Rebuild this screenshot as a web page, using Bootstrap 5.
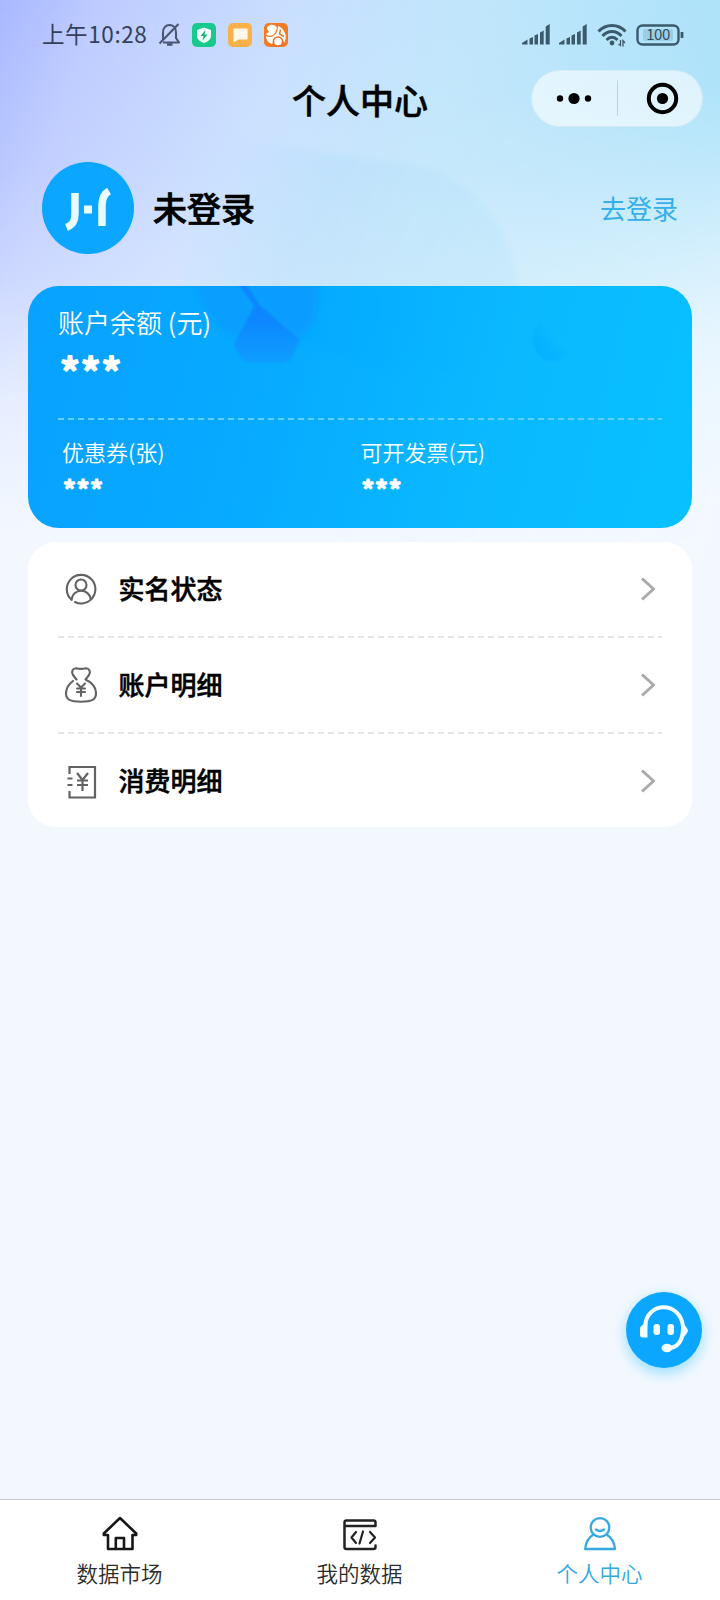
<!DOCTYPE html>
<html lang="zh-CN">
<head>
<meta charset="utf-8">
<meta name="viewport" content="width=device-width, initial-scale=1">
<title>个人中心</title>
<link href="https://cdn.jsdelivr.net/npm/bootstrap@5.3.0/dist/css/bootstrap.min.css" rel="stylesheet">
<style>
  body { font-family: "Noto Sans CJK SC", sans-serif; background: #f3f8ff; color: #000; }
  .app-page { height: 1600px; overflow: hidden; }
  .hero-art { top: 0; left: 0; z-index: 0; }
  .layer { z-index: 1; }
  .status-bar { height: 70px; padding: 0 36px 0 42px; color: #34405a; }
  .status-time { font-size: 22.5px; line-height: 30px; letter-spacing: .6px; width: 115px; white-space: nowrap; margin-top: -4px; }
  .title-bar { height: 56px; padding-right: 17px; }
  .title-bar h1 { font-size: 34px; line-height: 50px; font-weight: 500; margin: 5px 0 0; -webkit-text-stroke: .5px #000; }
  .title-side { padding-left: 17px; }
  .capsule { width: 172px; height: 57px; border-radius: 29px; background: rgba(255,255,255,.58); border: 1px solid rgba(150,200,220,.22); }
  .user-row { height: 92px; margin: 36px 42px 32px; }
  .user-name { font-size: 34px; line-height: 46px; font-weight: 500; margin-left: 19px; -webkit-text-stroke: .7px #000; }
  .login-link { font-size: 26px; line-height: 36px; color: #35afea; text-decoration: none; margin-top: -1px; }
  .balance-card { margin: 0 28px; height: 242px; border-radius: 31px; color: #fff; padding: 0 30px 0 30px;
    background: linear-gradient(105deg, #08a1ff 0%, #07abff 38%, #0ab8ff 66%, #08c1ff 100%); }
  .card-art { top: 0; left: 0; }
  .bal-label { font-size: 26px; line-height: 36px; padding-top: 18px; font-weight: 350; }
  .bal-stars { font-size: 39px; line-height: 44px; font-weight: 700; letter-spacing: 1px; height: 44px; margin-top: 8px; padding-left: 2px; -webkit-text-stroke: 1.5px #fff; }
  .sub-label { font-size: 22px; line-height: 32px; font-weight: 350; }
  .sub-stars { font-size: 25.5px; line-height: 30px; height: 30px; font-weight: 700; letter-spacing: .6px; margin-top: 7px; padding-left: 1px; -webkit-text-stroke: 1.2px #fff; }
  .dash-line { height: 2px; background: repeating-linear-gradient(90deg, var(--dash) 0 6px, transparent 6px 10px); }
  .menu-card { margin: 14px 28px 0; height: 285px; border-radius: 28px; background: #fff; padding: 0 30px; }
  .menu-item { height: 94px; padding: 0 5px 0 7px; font-size: 26px; line-height: 36px; font-weight: 500; color: #000; text-decoration: none; }
  .menu-item svg { flex: none; }
  .menu-item span { margin-left: 21.5px; margin-top: -2px; -webkit-text-stroke: .5px #000; }
  .tab-bar { height: 101px; background: #fff; border-top: 1px solid #c9c9d3; }
  .tab-item { font-size: 21.5px; line-height: 30px; color: #2b2b2b; text-decoration: none; padding-top: 14px; font-weight: 350; }
  .tab-item.on { color: #2fa9e0; }
  .tab-item span { margin-top: 4px; margin-left: -1px; }
  .service-btn { width: 76px; height: 76px; border: 0; padding: 0; margin: 0 18px 131px auto; border-radius: 50%; background: #0ba6ff; box-shadow: 0 5px 14px rgba(20,185,255,.42); }
</style>
</head>
<body>
<div class="app-page position-relative d-flex flex-column">
  <svg class="hero-art position-absolute" width="720" height="560" aria-hidden="true">
    <defs>
      <linearGradient id="skyH" x1="0" y1="0" x2="1" y2=".25">
        <stop offset="0" stop-color="#a8b8ff"/><stop offset=".13" stop-color="#bdcbff"/><stop offset=".38" stop-color="#c9dfff"/>
        <stop offset=".62" stop-color="#c0e6fb"/><stop offset="1" stop-color="#aae2fa"/>
      </linearGradient>
      <linearGradient id="skyV" x1="0" y1="0" x2="0" y2="1">
        <stop offset="0" stop-color="#f3f8ff" stop-opacity="0"/><stop offset=".3" stop-color="#f3f8ff" stop-opacity=".1"/>
        <stop offset=".5" stop-color="#f3f8ff" stop-opacity=".3"/><stop offset=".72" stop-color="#f3f8ff" stop-opacity=".75"/><stop offset=".95" stop-color="#f3f8ff"/>
      </linearGradient>
      <linearGradient id="skyR" x1="0" y1="0" x2="0" y2="1">
        <stop offset=".15" stop-color="#eef8ff" stop-opacity="0"/><stop offset=".6" stop-color="#eef8ff" stop-opacity=".75"/><stop offset="1" stop-color="#f3f8ff"/>
      </linearGradient>
      <linearGradient id="maskG" x1="0" y1="0" x2="1" y2="0">
        <stop offset=".45" stop-color="#000"/><stop offset="1" stop-color="#fff"/>
      </linearGradient>
      <mask id="fadeR"><rect width="720" height="560" fill="url(#maskG)"/></mask>
      <linearGradient id="bubble" x1="0" y1="0" x2="1" y2=".3">
        <stop offset=".1" stop-color="#a5d4f8" stop-opacity="0"/><stop offset=".5" stop-color="#a5d8f8" stop-opacity=".24"/><stop offset="1" stop-color="#a5dcf8" stop-opacity=".2"/>
      </linearGradient>
      <filter id="soft"><feGaussianBlur stdDeviation="3"/></filter>
    </defs>
    <rect width="720" height="560" fill="url(#skyH)"/>
    <rect width="720" height="560" fill="url(#skyV)"/>
    <rect width="720" height="560" fill="url(#skyR)" mask="url(#fadeR)"/>
    <path d="M210 125C270 146 330 156 400 162C470 170 518 230 519 300H180Z" fill="url(#bubble)" filter="url(#soft)"/>
  </svg>

  <header class="layer">
    <div class="status-bar d-flex align-items-center">
      <div class="status-time">上午10:28</div>
      <svg width="132" height="28" viewBox="0 0 132 28">
        <g fill="none" stroke="#4a5672" stroke-width="2.1" stroke-linejoin="round">
          <path d="M6 19V11.500C6 6.500 9 4 12.500 4S19 6.500 19 11.500V17L22 21.500H6"/><path d="M2.500 22.500L21.500 3"/>
          <path d="M10 23.500H15.500" stroke-width="2.600"/>
        </g>
        <rect x="35" y="2" width="24" height="24" rx="5" fill="#18c98c"/>
        <path d="M47 6.500L54 9V15C54 18.500 51 20.500 47 22C43 20.500 40 18.500 40 15V9Z" fill="#f1fff9"/>
        <path d="M48.500 9L43.500 15H46.500L45.500 19.500L50.500 13.500H47.500Z" fill="#18b27d"/>
        <rect x="71" y="2" width="24" height="24" rx="5" fill="#fcb04a"/>
        <path d="M76.500 7.500H90.500V18.500H81.500L76.500 21.500Z" fill="#fff8ea"/>
        <rect x="107" y="2" width="24" height="24" rx="5" fill="#f47a24"/>
        <path d="M110 8C110 3 118 2 120 7L118 12C116 15 111 16 109 13L112 11Z" fill="#fff"/>
        <path d="M121 5C128 8 131 16 127 22C125 15 119 15 117 20L115 23C110 21 109 18 109 15C116 18 121 13 121 5Z" fill="#fff"/>
        <circle cx="121" cy="20.500" r="4.600" fill="#fff" stroke="#ec6a1c" stroke-width="1.500"/>
        <path d="M123.500 8.500L122.500 13L127 15.500" stroke="#f47a24" stroke-width="1.500" fill="none"/>
      </svg>
      <svg class="ms-auto" width="162" height="26" viewBox="0 0 162 26">
        <g fill="#3b5a6b">
          <path d="M0 22.500V21L5.500 17.500V22.500ZM7.500 16.500L11 15V22.500H7.500ZM12.500 13.500L16 12V22.500H12.500ZM18 10.500L21.700 8.500V22.500H18ZM23.700 4.500L27.700 2V22.500H23.700Z" id="sig"/>
          <use href="#sig" x="37"/>
        </g>
        <g fill="none" stroke="#3b5a6b" stroke-width="3">
          <path d="M76.500 9.500C84 1.500 96 1.500 103.500 9.500"/><path d="M80.500 14C86 8 94 8 99.500 14"/><path d="M84.500 18C88 14.300 92 14.300 95.500 18"/>
        </g>
        <circle cx="90" cy="21" r="2.400" fill="#3b5a6b"/>
        <path d="M98.500 18V23.500L96.500 22M101 24.500V18.500L103 21" fill="none" stroke="#3b5a6b" stroke-width="1.300"/>
        <rect x="115.500" y="3.500" width="41" height="19" rx="5" fill="none" stroke="#3b5a6b" stroke-width="2.400"/>
        <rect x="121" y="7" width="30" height="12" rx="2" fill="#5c8ba2" opacity=".25"/>
        <path d="M160 10V16" stroke="#3b5a6b" stroke-width="2.800"/>
        <text x="136" y="18.300" text-anchor="middle" font-size="15" letter-spacing="-.5" fill="#32505f">100</text>
      </svg>
    </div>

    <div class="title-bar row g-0 align-items-start flex-nowrap">
      <div class="col title-side"></div>
      <h1 class="col-auto">个人中心</h1>
      <div class="col d-flex justify-content-end">
        <div class="capsule d-flex align-items-center">
          <svg width="170" height="55" viewBox="0 0 170 55">
            <circle cx="28" cy="27.500" r="3.200"/><circle cx="42" cy="27.500" r="5.600"/><circle cx="56" cy="27.500" r="3.200"/>
            <path d="M85.500 9.500V44.500" stroke="#bcd3dd"/>
            <circle cx="130.500" cy="27.500" r="13.700" fill="none" stroke="#000" stroke-width="4"/><circle cx="130.500" cy="27.500" r="5.600"/>
          </svg>
        </div>
      </div>
    </div>

    <div class="user-row d-flex align-items-center">
      <svg width="92" height="92" viewBox="0 0 92 92" role="img" aria-label="头像">
        <circle cx="46" cy="46" r="46" fill="#0aa6ff"/>
        <g fill="none" stroke="#e9fbff" stroke-width="7.500">
          <path d="M33 31V52C33 59 31 63 24.500 65.500"/><path d="M60 64V43C60 36 62 32 67 29"/>
        </g>
        <rect x="42" y="43.500" width="8" height="8" fill="#e9fbff"/>
      </svg>
      <div class="user-name">未登录</div>
      <a class="login-link ms-auto" href="#">去登录</a>
    </div>
  </header>

  <section class="balance-card layer position-relative overflow-hidden">
    <svg class="card-art position-absolute" width="664" height="242" aria-hidden="true">
      <defs>
        <linearGradient id="gemA" x1="0" y1="0" x2="0" y2="1"><stop offset="0" stop-color="#0a84ff"/><stop offset=".45" stop-color="#0a86ff"/><stop offset="1" stop-color="#0a98ff" stop-opacity=".7"/></linearGradient>
        <linearGradient id="swoop" x1="0" y1="0" x2="1" y2="0"><stop offset="0" stop-color="#07a4ff" stop-opacity=".7"/><stop offset="1" stop-color="#07b0ff" stop-opacity="0"/></linearGradient>
        <linearGradient id="dropG" x1="1" y1="0" x2="0" y2="1"><stop offset=".3" stop-color="#0aa8ff" stop-opacity="0"/><stop offset="1" stop-color="#0aa8ff" stop-opacity=".7"/></linearGradient>
        <filter id="b2"><feGaussianBlur stdDeviation="3"/></filter>
        <filter id="b1"><feGaussianBlur stdDeviation=".9"/></filter>
      </defs>
      <path d="M225 0C260 70 330 85 440 84L470 0Z" fill="url(#swoop)" opacity=".5" filter="url(#b2)"/>
      <path d="M218 -5H290C292 20 285 42 270 53L232 20Z" fill="#0a98ff" opacity=".75" filter="url(#b2)"/>
      <path d="M166 -5H212L226 22L210 52Q180 40 166 -5Z" fill="#0a98ff" opacity=".6" filter="url(#b2)"/>
      <path d="M210 -2H218L232 19L272 54L264 72Q260 77 252 77H220Q210 72 206 58L226 20Z" fill="url(#gemA)" filter="url(#b1)"/>
      <path d="M514 34C503 42 501 62 514 72C524 78 535 76 539 66C528 62 518 50 514 34Z" fill="url(#dropG)" filter="url(#b1)"/>
    </svg>
    <div class="position-relative">
      <div class="bal-label">账户余额 (元)</div>
      <div class="bal-stars">***</div>
      <div class="dash-line" style="--dash:#62cffb;margin-top:26px"></div>
      <div class="row g-0" style="margin-top:15px;padding-left:4px">
        <div class="col-6"><div class="sub-label">优惠券(张)</div><div class="sub-stars">***</div></div>
        <div class="col-6" style="margin-left:-1.5px"><div class="sub-label">可开发票(元)</div><div class="sub-stars">***</div></div>
      </div>
    </div>
  </section>

  <nav class="menu-card layer">
    <a class="menu-item d-flex align-items-center" href="#">
      <svg width="32" height="36" viewBox="0 0 32 36" fill="none" stroke="#626262" stroke-width="2.100" stroke-linecap="round">
        <path d="M6.500 28.800A14.300 14.300 0 1 1 26 28.500A14.300 14.300 0 0 1 10 31"/><circle cx="16" cy="14" r="5.500"/><path d="M6.500 28.500C8 17 24 17 25.800 28"/>
      </svg>
      <span>实名状态</span>
      <svg class="ms-auto" width="18" height="26" viewBox="0 0 18 26" fill="none" stroke="#aaa" stroke-width="2.900"><path d="M3 2.500L14.500 13L3 23.500"/></svg>
    </a>
    <div class="dash-line" style="--dash:#e6e6e6"></div>
    <a class="menu-item d-flex align-items-center" href="#">
      <svg width="32" height="36" viewBox="0 0 32 36" fill="none" stroke="#626262" stroke-width="2.100" stroke-linecap="round" stroke-linejoin="round">
        <path d="M11.500 12.500L8 8C6 4.500 8 1.300 11 1.300Q16 2.500 21 1.300C24 1.300 26 4.500 24 8L20.500 12.500C27 15.500 31 21 31 26.500C31 32.500 27 34.700 16 34.700S1 32.500 1 26.500C1 21 4 17 8 14"/>
        <path d="M12 16.500L16 20.500L20 16.500M12 21.500H20M12 25H20M16 21V29"/>
      </svg>
      <span>账户明细</span>
      <svg class="ms-auto" width="18" height="26" viewBox="0 0 18 26" fill="none" stroke="#aaa" stroke-width="2.900"><path d="M3 2.500L14.500 13L3 23.500"/></svg>
    </a>
    <div class="dash-line" style="--dash:#e6e6e6"></div>
    <a class="menu-item d-flex align-items-center" href="#">
      <svg width="32" height="36" viewBox="0 0 32 36" fill="none" stroke="#626262" stroke-width="2.200">
        <path d="M4.500 11V4H30V34.500H4.500V28M2.500 15.500H7.500M2.500 22H7.500"/><path d="M12 10L17.500 17L23 10M12 17.500H23M12 22H23M17.500 17V28"/>
      </svg>
      <span>消费明细</span>
      <svg class="ms-auto" width="18" height="26" viewBox="0 0 18 26" fill="none" stroke="#aaa" stroke-width="2.900"><path d="M3 2.500L14.500 13L3 23.500"/></svg>
    </a>
  </nav>

  <button class="service-btn mt-auto" type="button" aria-label="客服">
    <svg class="d-block" width="76" height="76" viewBox="0 0 76 76">
      <g fill="none" stroke="#f2fdff" stroke-width="4">
        <path d="M19 34C21 9 54 9 57 34"/><path d="M57 36C57 50 51 56 41 56.500"/>
      </g>
      <path d="M21.500 30V45.500H17Q14 45.500 14 43V36Q15 33 21.500 30ZM55 30Q61 34 62 39Q60 44 55 47Z" fill="#f2fdff"/>
      <rect x="27.500" y="32" width="6.500" height="11" rx="3" fill="#f2fdff"/><rect x="41.500" y="32" width="6.500" height="11" rx="3" fill="#f2fdff"/>
      <ellipse cx="41" cy="56" rx="5.500" ry="4.200" fill="#f2fdff"/>
    </svg>
  </button>

  <footer class="tab-bar row g-0 flex-shrink-0">
    <a class="tab-item col-4 d-flex flex-column align-items-center" href="#">
      <svg width="38" height="40" viewBox="0 0 38 40" fill="none" stroke="#171717" stroke-width="2.600" stroke-linejoin="round">
        <path d="M19 4L2.800 19.500V21H7V35H31.500V21H35.200V19.500ZM14.800 35V24H23V35"/>
      </svg>
      <span>数据市场</span>
    </a>
    <a class="tab-item col-4 d-flex flex-column align-items-center" href="#">
      <svg width="38" height="40" viewBox="0 0 38 40" fill="none" stroke="#222" stroke-width="2.500" stroke-linecap="round" stroke-linejoin="round">
        <path d="M34.500 31.500V33Q34.500 35 32.500 35H5.500Q3.500 35 3.500 33V8.500Q3.500 6.500 5.500 6.500H32.500Q34.500 6.500 34.500 8.500V12H4"/>
        <path d="M15 18L10.500 23.500L15 29M22 17.500L18.500 29.500M29 18L34 23.500L29 29" stroke-width="2.200"/>
      </svg>
      <span>我的数据</span>
    </a>
    <a class="tab-item on col-4 d-flex flex-column align-items-center" href="#">
      <svg width="38" height="40" viewBox="0 0 38 40" fill="none" stroke="#36a9de" stroke-width="2.300" stroke-linejoin="round">
        <circle cx="19" cy="13.500" r="9.300"/><path d="M15 15.500Q19 18.500 23 15.500" stroke-linecap="round"/><path d="M12.500 20.500Q5 25 4.200 35H34Q33 25 25.500 20.500"/>
      </svg>
      <span>个人中心</span>
    </a>
  </footer>
</div>
<script src="https://cdn.jsdelivr.net/npm/bootstrap@5.3.0/dist/js/bootstrap.bundle.min.js"></script>
</body>
</html>
